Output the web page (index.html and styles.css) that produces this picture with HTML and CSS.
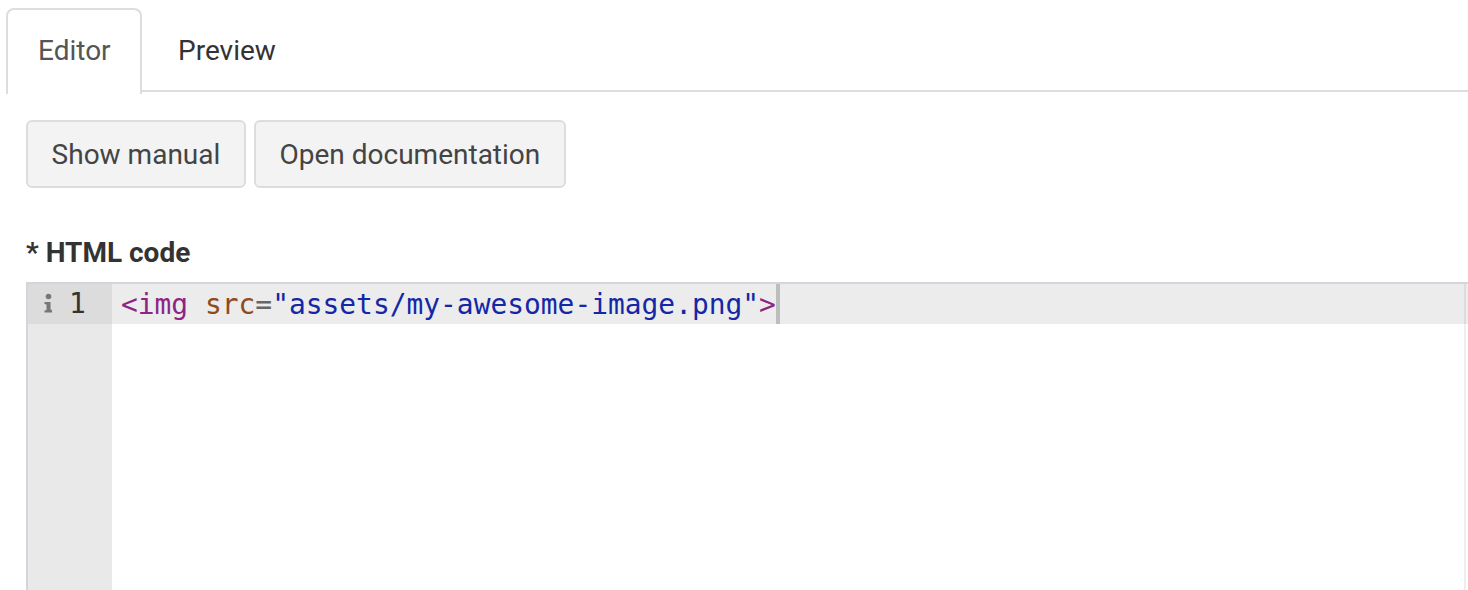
FILE: index.html
```html
<!DOCTYPE html>
<html lang="en">
<head>
<meta charset="utf-8">
<title>Editor</title>
<link rel="stylesheet" href="styles.css">
</head>
<body>
<nav class="tabs">
  <a class="tab tab-active">Editor</a>
  <a class="tab tab-plain">Preview</a>
</nav>
<div class="toolbar">
  <button class="btn">Show manual</button>
  <button class="btn">Open documentation</button>
</div>
<div class="field-label">* HTML code</div>
<div class="editor">
  <div class="gutter">
    <div class="gutter-cell">
      <svg class="info" width="10" height="22" viewBox="0 0 10 22"><circle cx="5.500" cy="3.500" r="2.800"/><path d="M1.500 9h6v7.500l1.500 .5v2.500h-7.500v-2l2-.5v-5.500l-2-.5z"/></svg>
      <span class="line-no">1</span>
    </div>
  </div>
  <div class="code">
    <div class="code-line"><span class="t-tag">&lt;img</span> <span class="t-attr">src</span><span class="t-eq">=</span><span class="t-str">"assets/my-awesome-image.png"</span><span class="t-tag">&gt;</span><span class="cursor"></span></div>
    <div class="edge"></div>
  </div>
</div>
</body>
</html>
```
FILE: styles.css
```css
html, body { margin: 0; padding: 0; background: #fff; overflow: hidden; }
body { width: 1468px; height: 590px; font-family: Roboto, sans-serif; color: #333; }

.tabs {
  display: flex;
  height: 90px;
  margin-left: 6px;
  border-bottom: 2px solid #ddd;
}
.tab {
  display: flex;
  align-items: center;
  padding: 0 30px 2px;
  margin-top: 8px;
  height: 82px;
  font-size: 28px;
  line-height: 40px;
  color: #333;
  border: 2px solid transparent;
  border-bottom: 0;
  border-radius: 8px 8px 0 0;
}
.tab-plain { margin-left: 4px; }
.tab-active {
  width: 72px;
  color: #555;
  border-color: #ddd;
  background: #fff;
  margin-bottom: -2px;
}
.toolbar {
  display: flex;
  gap: 8px;
  padding: 28px 0 0 26px;
}
.btn {
  height: 68px;
  padding: 0 23.600px;
  font-family: Roboto, sans-serif;
  font-size: 28px;
  color: #444;
  background: #f3f3f3;
  border: 2px solid #ddd;
  border-radius: 6px;
}
.field-label {
  margin: 47px 0 0 26px;
  font-size: 28px;
  line-height: 36px;
  font-weight: 700;
  color: #333;
}
.editor {
  display: flex;
  margin: 11px 0 0 26px;
  height: 308px;
  border-top: 2px solid #d2d6dc;
  border-left: 2px solid #d2d6dc;
  background: #fff;
}
.gutter { width: 84px; flex: none; background: #e9e9e9; }
.gutter-cell {
  height: 40px;
  display: flex;
  align-items: center;
  background: #dcdcdc;
  padding-left: 15px;
  gap: 16px;
}
.info { fill: #777; flex: none; filter: blur(0.6px); }
.line-no {
  font-family: "DejaVu Sans Mono", monospace;
  font-size: 28px;
  line-height: 44px;
  color: #333;
}
.code { flex: 1; min-width: 0; position: relative; }
.code-line {
  height: 40px;
  padding-left: 9px;
  background: #ececec;
  font-family: "DejaVu Sans Mono", monospace;
  font-size: 27.900px;
  line-height: 42px;
  white-space: pre;
}
.t-tag { color: #8e2486; }
.t-attr { color: #8f4a1d; }
.t-eq { color: #666; }
.t-str { color: #1427a6; }
.cursor {
  display: inline-block;
  width: 4px;
  height: 40px;
  background: #bdbdbd;
  vertical-align: top;
}
.edge {
  position: absolute;
  top: 0;
  right: 2px;
  bottom: 0;
  width: 2px;
  background: linear-gradient(#dcdcdc 40px, #eee 40px);
}
```
